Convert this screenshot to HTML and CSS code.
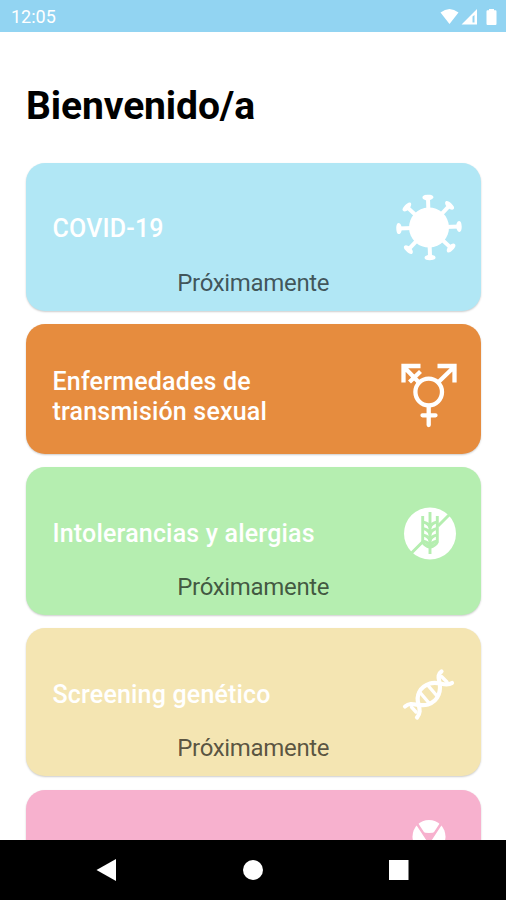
FILE: index.html
```html
<!DOCTYPE html>
<html lang="es">
	<head>
		<meta charset="utf-8">
		<title>Bienvenido/a</title>
		<meta name="viewport" content="width=device-width, initial-scale=1.0">
		<link rel="stylesheet" href="styles.css">
	</head>
	<body>
		<header class="status">
			<span class="clock">12:05</span>
			<svg class="status-icons" width="58" height="20" viewBox="0 0 58 20" fill="#fff">
				<path d="M0.500 5.500Q9.500 -1.500 18.500 5.500L9.500 17Z"/>
				<path fill-rule="evenodd" d="M21.500 17.500L37 2V17.500ZM32.500 9.500V15.500H34.500V8Z"/>
				<path d="M49 2H54V3.200H55.500Q56.500 3.200 56.500 4.200V16.800Q56.500 18 55.500 18H47.500Q46.500 18 46.500 16.800V4.200Q46.500 3.200 47.500 3.200H49Z"/>
			</svg>
		</header>
		<main class="content">
			<h1>Bienvenido/a</h1>
			<div class="list">
				<div class="card covid">
					<div class="row">
						<h2>COVID-19</h2>
						<svg class="icon" viewBox="0 0 68 68" fill="#fff">
							<defs>
								<g id="spike">
									<path d="M31 1.500H35V17H31Z"/>
									<path d="M27.500 2.200C27.500 0.300 30.500 -0.200 33 -0.200S38.500 0.300 38.500 2.200C38.500 4.200 35.500 5.200 33 5.200S27.500 4.200 27.500 2.200Z"/>
								</g>
							</defs>
							<g transform="rotate(-2 33 32.500)">
								<circle cx="33" cy="32.500" r="20"/>
								<use href="#spike"/>
								<use href="#spike" transform="rotate(45 33 32.500)"/>
								<use href="#spike" transform="rotate(90 33 32.500)"/>
								<use href="#spike" transform="rotate(135 33 32.500)"/>
								<use href="#spike" transform="rotate(180 33 32.500)"/>
								<use href="#spike" transform="rotate(225 33 32.500)"/>
								<use href="#spike" transform="rotate(270 33 32.500)"/>
								<use href="#spike" transform="rotate(315 33 32.500)"/>
							</g>
						</svg>
					</div>
					<p class="soon">Próximamente</p>
				</div>
				<div class="card ets">
					<div class="row">
						<h2>Enfermedades de transmisión sexual</h2>
						<svg class="icon" viewBox="0 0 68 68" fill="none" stroke="#fff" stroke-width="4.300">
							<circle cx="32.700" cy="29" r="13.300"/>
							<path stroke-linecap="round" d="M32.700 43V62M26.500 52.300H39.500"/>
							<path d="M42 19.500L58 4M41.500 3H58.500V19.500M23 19.500L8 4M24.500 3H7.500V19.500M24.500 8.500L13.500 19"/>
						</svg>
					</div>
				</div>
				<div class="card alergias">
					<div class="row">
						<h2>Intolerancias y alergias</h2>
						<svg class="icon" viewBox="0 0 68 68">
							<circle cx="34" cy="33.500" r="26" fill="#fff"/>
							<g fill="none" stroke="#b5eeb0" stroke-width="2.900">
								<path d="M54.500 13.500L42 26M27 41.500L15.500 53"/>
								<path d="M34 12V54M26.700 16V42Q28.500 45.500 34 47.500Q39.500 45.500 41.300 42V16"/>
								<path d="M26.700 22Q33 23 34 28Q35 23 41.300 22M26.700 28.500Q33 29.500 34 34.500Q35 29.500 41.300 28.500M26.700 35Q33 36 34 41Q35 36 41.300 35M26.700 41Q33 42 34 47Q35 42 41.300 41"/>
							</g>
						</svg>
					</div>
					<p class="soon">Próximamente</p>
				</div>
				<div class="card screening">
					<div class="row">
						<h2>Screening genético</h2>
						<svg class="icon" viewBox="0 0 68 68" fill="none" stroke="#fff" stroke-width="4.200" stroke-linecap="round">
							<path d="M9 45.500C16 39.500 22 46.500 32 43.500C43 40 45.500 29 43.200 20C42.200 15.500 42 13 45.500 10.500"/>
							<path d="M56 22C49 26.500 43 19.500 34 22.500C23 26 20 35 22.500 43C24 49 24.500 52.500 21 56.500"/>
							<path stroke-width="3.400" d="M24.500 32L33 42M32 24.500L41 35M45.500 15.500L51 21M15.500 46L20 51"/>
						</svg>
					</div>
					<p class="soon">Próximamente</p>
				</div>
				<div class="card otros">
					<div class="row">
						<h2></h2>
						<svg class="icon" viewBox="0 0 68 68">
							<circle cx="33" cy="14.500" r="16.500" fill="#fff"/>
							<path fill="#f7b1ce" d="M25.500 9.500Q33 12.500 40.500 9.500L33 22Z"/>
							<path fill="none" stroke="#f7b1ce" stroke-width="2.500" d="M20.500 1L33 20L45.500 1"/>
						</svg>
					</div>
				</div>
			</div>
		</main>
		<nav class="navbar">
			<svg width="22" height="22" viewBox="0 0 22 22" fill="#fff"><path d="M0.500 11L20 0V22Z"/></svg>
			<svg width="22" height="22" viewBox="0 0 22 22" fill="#fff"><circle cx="11" cy="11" r="10"/></svg>
			<svg width="22" height="22" viewBox="0 0 22 22" fill="#fff"><rect x="1" y="1" width="19.500" height="20"/></svg>
		</nav>
	</body>
</html>
```
FILE: styles.css
```css
* {
	box-sizing: border-box;
}
body {
	margin: 0;
	height: 900px;
	display: flex;
	flex-direction: column;
	overflow: hidden;
	background-color: #fff;
	font-family: Roboto, sans-serif;
}
h1, h2, p {
	margin: 0;
}
.status {
	flex: none;
	height: 32px;
	padding: 1px 8px 0 11px;
	display: flex;
	justify-content: space-between;
	align-items: center;
	background-color: #92d4f2;
	color: #fff;
}
.clock {
	font-size: 18px;
}
.content {
	flex: 1;
	min-height: 0;
	padding: 51px 25.500px 0 26px;
	overflow: hidden;
}
h1 {
	font-size: 39px;
	line-height: 46px;
	font-weight: 700;
	letter-spacing: -0.1px;
	color: #000;
}
.list {
	display: flex;
	flex-direction: column;
	gap: 13.300px;
	margin-top: 33.500px;
}
.card {
	flex: none;
	height: 148px;
	padding-top: 32.500px;
	border-radius: 19px;
	box-shadow: 0 1px 2px rgba(0, 0, 0, 0.2);
}
.row {
	height: 68px;
	padding: 0 17px 0 26.500px;
	display: flex;
	justify-content: space-between;
	align-items: center;
}
h2 {
	width: 290px;
	font-size: 25px;
	line-height: 30px;
	font-weight: 500;
	letter-spacing: 0.18px;
	color: #fff;
}
.icon {
	width: 68px;
	height: 68px;
	flex: none;
	overflow: visible;
}
.soon {
	margin-top: 4.500px;
	font-size: 24px;
	line-height: 30px;
	letter-spacing: -0.33px;
	text-align: center;
	color: rgba(0, 0, 0, 0.65);
}
.covid {
	background-color: #b1e7f5;
}
.ets {
	height: 130px;
	padding-top: 39px;
	background-color: #e68c3e;
}
.alergias {
	background-color: #b5eeb0;
}
.screening {
	background-color: #f4e5b2;
}
.otros {
	background-color: #f7b1ce;
}
.navbar {
	flex: none;
	height: 60px;
	display: grid;
	grid-template-columns: repeat(3, 146px);
	justify-content: center;
	justify-items: center;
	align-items: center;
	background-color: #000;
}
```
